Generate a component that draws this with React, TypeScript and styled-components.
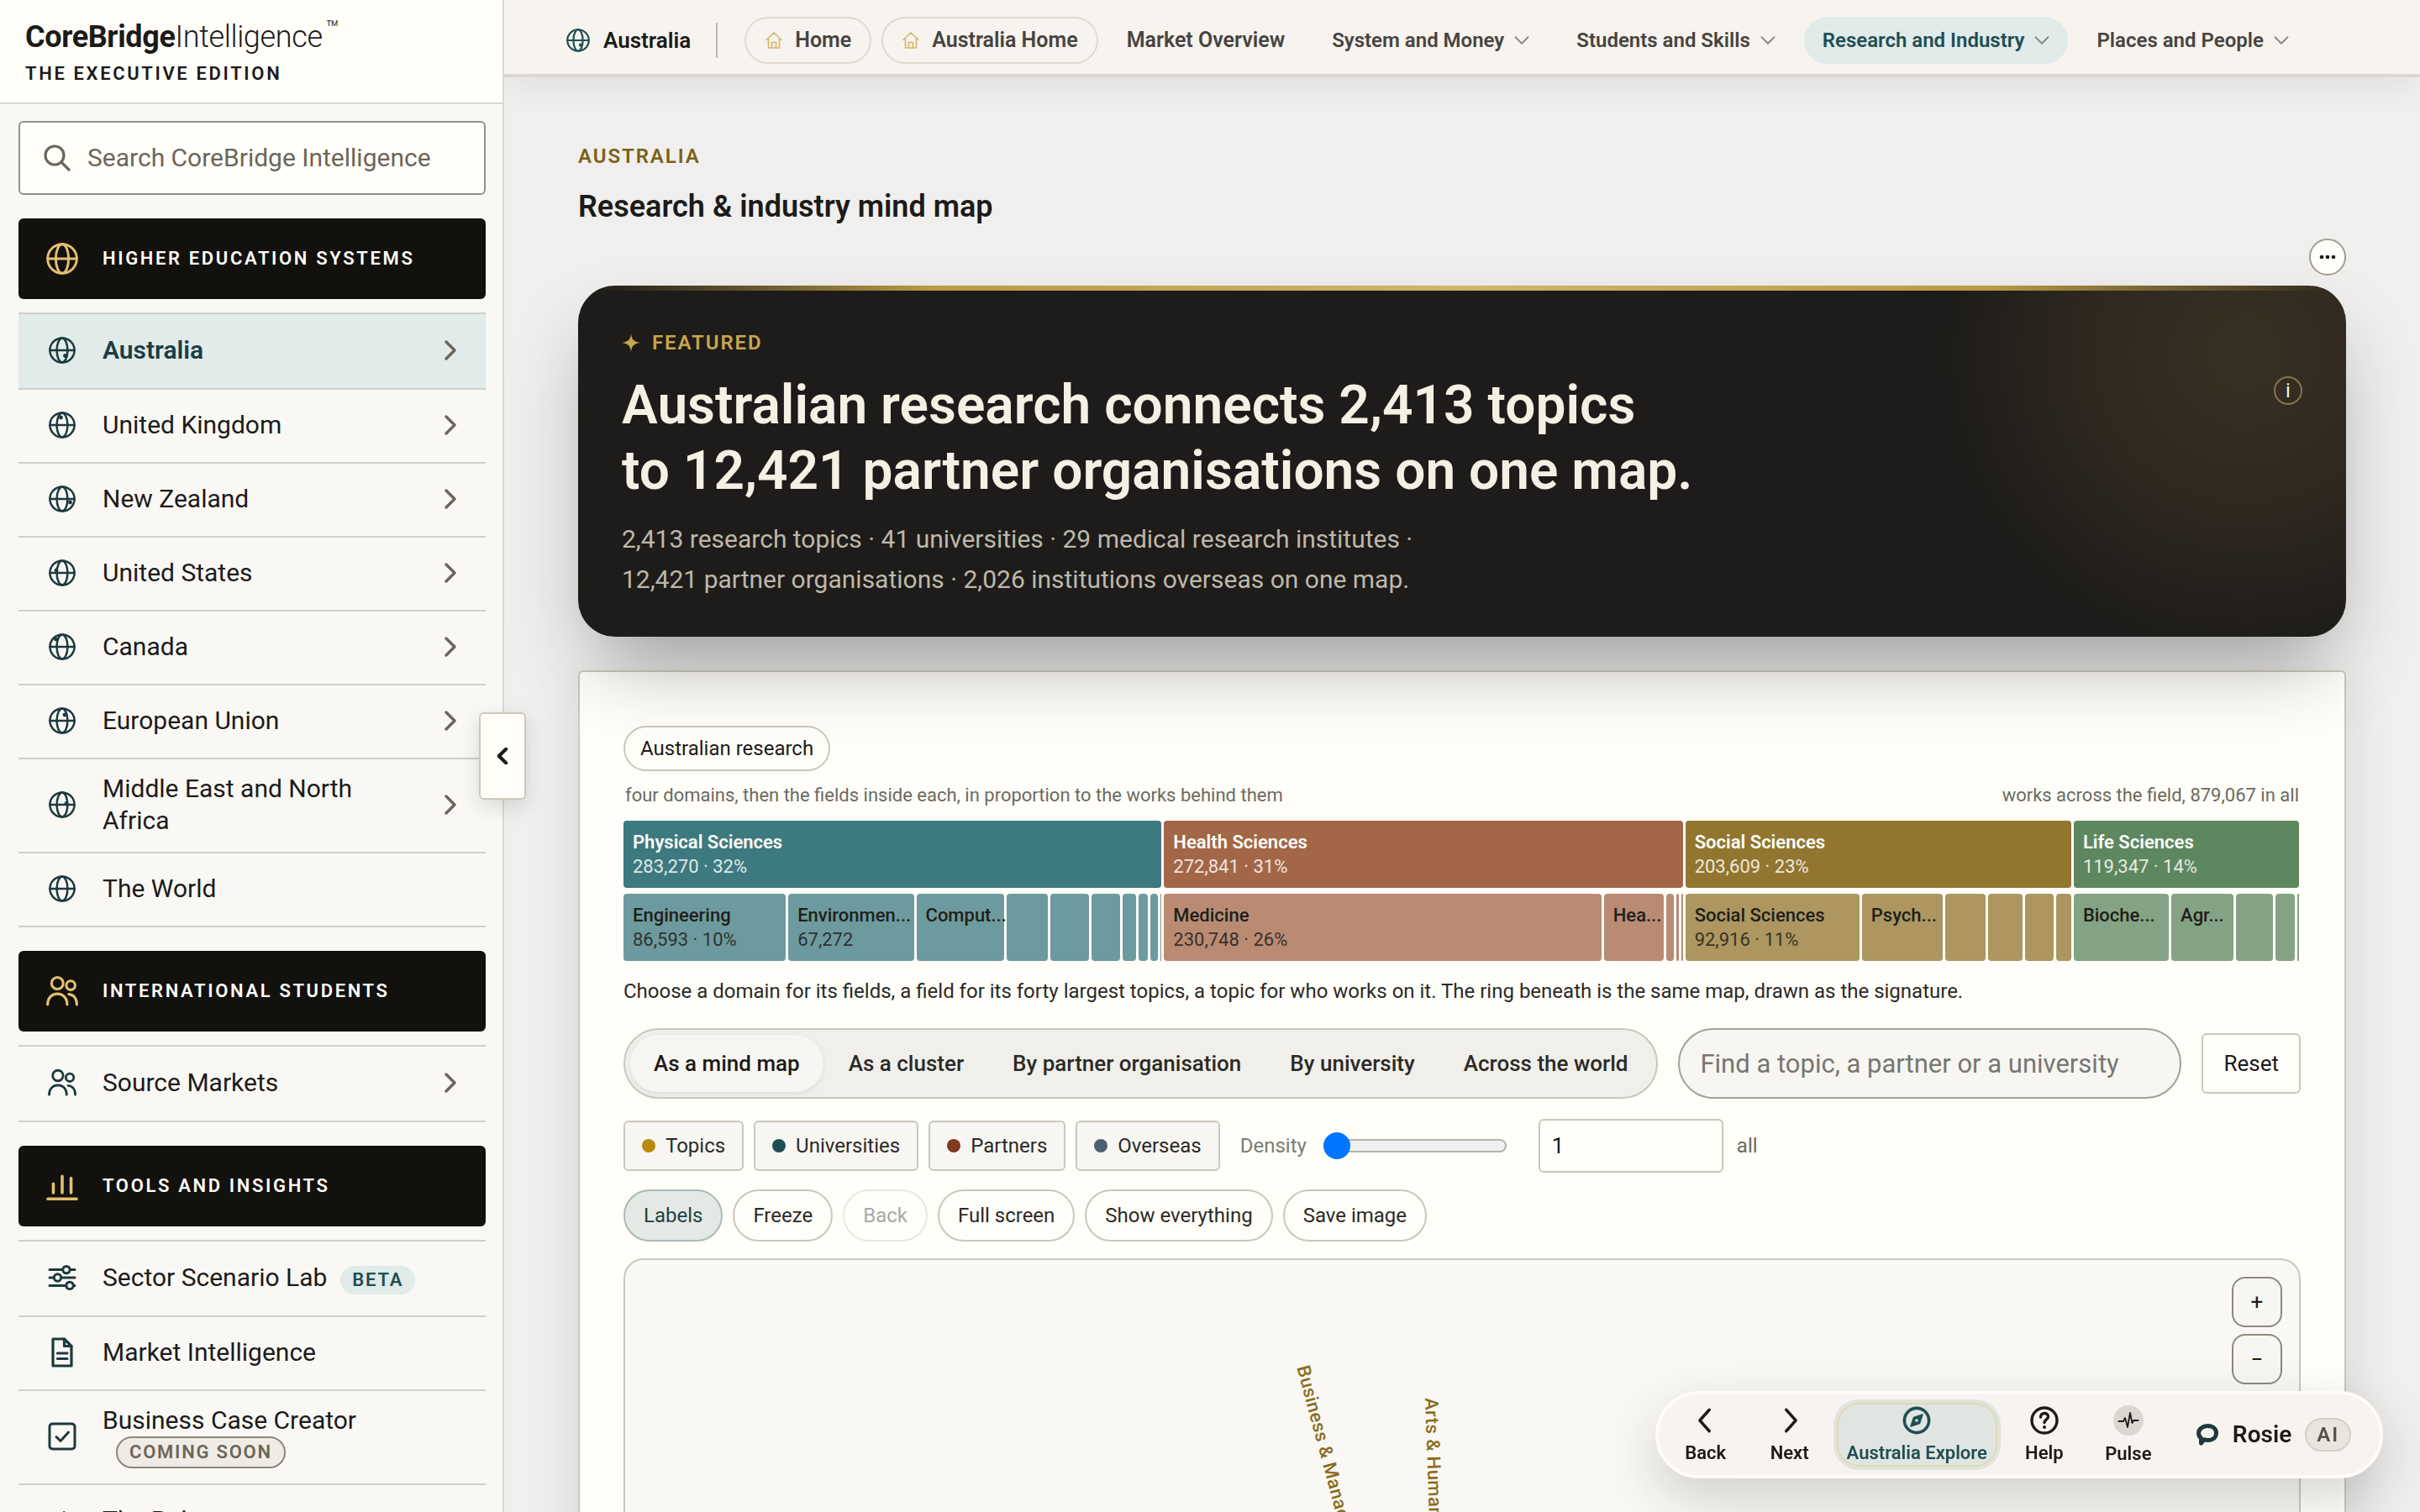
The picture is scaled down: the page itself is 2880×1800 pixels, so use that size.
import React from "react";
import styled, { createGlobalStyle, css } from "styled-components";

const GlobalStyle = createGlobalStyle`
  *, *::before, *::after { box-sizing: border-box; }
  html, body { margin: 0; padding: 0; }
  body {
    background: #f0efee;
    color: #1c1b19;
    font-family: Roboto, "Liberation Sans", sans-serif;
    font-size: 24px;
    line-height: 32px;
    overflow: hidden;
  }
  button, input { font: inherit; color: inherit; margin: 0; }
  button { cursor: pointer; padding: 0; background: none; border: 0; }
  a { color: inherit; text-decoration: none; }
  h1, h2, p, ul { margin: 0; padding: 0; }
  ul { list-style: none; }
  svg { display: block; flex: none; }
`;

/* ---------- icons ---------- */

const Svg = styled.svg.attrs({
  fill: "none",
  stroke: "currentColor",
  strokeLinecap: "round",
  strokeLinejoin: "round",
})<{ $size: number }>`
  width: ${(p) => p.$size}px;
  height: ${(p) => p.$size}px;
`;

type IconProps = { size: number };

const Globe = ({ size, dot }: IconProps & { dot?: [number, number] }) => (
  <Svg $size={size} viewBox="0 0 32 32" strokeWidth={2.5} aria-hidden="true">
    <circle cx="16" cy="16" r="14.6" />
    <ellipse cx="16" cy="16" rx="6.4" ry="14.6" />
    <path d="M1.4 16h29.2" />
    {dot && <circle cx={dot[0]} cy={dot[1]} r="2.4" fill="currentColor" stroke="none" />}
  </Svg>
);

const People = ({ size }: IconProps) => (
  <Svg $size={size} viewBox="0 0 36 36" strokeWidth={3} aria-hidden="true">
    <circle cx="12.6" cy="9" r="6.6" />
    <circle cx="27.6" cy="11.4" r="5" />
    <path d="M1.6 33c0-7.4 4.6-12 11-12s11 4.6 11 12" />
    <path d="M25.5 21.5c5.6.5 9 5 9 11.5" />
  </Svg>
);

const Bars = ({ size }: IconProps) => (
  <Svg $size={size} viewBox="0 0 36 36" strokeWidth={3.4} aria-hidden="true">
    <path d="M1.8 32.5h32.4M8 25.5v-10M18 25.5V7M28 25.5V9" />
  </Svg>
);

const Sliders = ({ size }: IconProps) => (
  <Svg $size={size} viewBox="0 0 34 34" strokeWidth={3} aria-hidden="true">
    <path d="M2 7.6h15.5M26.5 7.6H32M2 17h5M16 17h16M2 26.4h20M31 26.4h1" />
    <circle cx="22" cy="7.6" r="4.2" />
    <circle cx="11.5" cy="17" r="4.2" />
    <circle cx="26" cy="26.4" r="4.2" />
  </Svg>
);

const Doc = ({ size }: IconProps) => (
  <Svg $size={size} viewBox="0 0 36 36" strokeWidth={3.2} strokeLinejoin="miter" aria-hidden="true">
    <path d="M7 2h13.5L29 10.5V34H7z" />
    <path d="M20.5 2v8.5H29M12.5 19h11.5M12.5 25.5h11.5" />
  </Svg>
);

const CheckBox = ({ size }: IconProps) => (
  <Svg $size={size} viewBox="0 0 34 34" strokeWidth={3} aria-hidden="true">
    <rect x="2" y="2" width="30" height="30" rx="3.5" />
    <path d="M10 17.5l5 5 9.5-10.5" />
  </Svg>
);

const PulseLine = ({ size, width = 1.8 }: IconProps & { width?: number }) => (
  <Svg $size={size} viewBox="0 0 26 26" strokeWidth={width} aria-hidden="true">
    <path d="M1.5 14H7l2-4 3 11 3-17 2.5 12 1.5-3h5.5" />
  </Svg>
);

const Search = ({ size }: IconProps) => (
  <Svg $size={size} viewBox="0 0 32 32" strokeWidth={3.2} aria-hidden="true">
    <circle cx="13" cy="13" r="11" />
    <path d="M21.5 21.5L30 30" />
  </Svg>
);

const House = ({ size }: IconProps) => (
  <Svg $size={size} viewBox="0 0 22 22" strokeWidth={1.6} aria-hidden="true">
    <path d="M2 10.5L11 2l9 8.5M4.5 9V20h13V9M8.5 20v-6.5h5V20" />
  </Svg>
);

const Caret = ({ size, d, width = 3 }: IconProps & { d: string; width?: number }) => (
  <Svg $size={size} viewBox="0 0 24 24" strokeWidth={width} aria-hidden="true">
    <path d={d} />
  </Svg>
);

const RIGHT = "M7 2l10 10L7 22";
const LEFT = "M17 2L7 12l10 10";
const DOWN = "M2 7l10 10L22 7";

/* ---------- shell ---------- */

const Shell = styled.div`
  display: flex;
  height: 100vh;
  overflow: hidden;
`;

const Sidebar = styled.aside`
  position: relative;
  z-index: 3;
  flex: none;
  width: 600px;
  border-right: 2px solid #d9d8d3;
  background: #f9f8f5;
`;

const SidebarScroll = styled.div`
  height: 100vh;
  overflow: hidden;
`;

const Brand = styled.div`
  padding: 24px 30px 20px;
  border-bottom: 2px solid #d9d8d3;
  background: #fffef9;
`;

const Wordmark = styled.div`
  display: flex;
  align-items: flex-start;
  font-size: 36px;
  line-height: 40px;
  font-weight: 300;
  letter-spacing: -0.01em;
  b { font-weight: 700; }
  sup { font-size: 26px; line-height: 20px; letter-spacing: 0; margin-left: 4px; }
`;

const Tagline = styled.div`
  margin-top: 9px;
  font-size: 22px;
  line-height: 29px;
  font-weight: 600;
  letter-spacing: 0.12em;
`;

const SidebarBody = styled.div`
  display: flex;
  flex-direction: column;
  gap: 28px;
  padding: 20px 20px 0 22px;
`;

const SearchBox = styled.div`
  display: flex;
  align-items: center;
  gap: 20px;
  height: 88px;
  padding: 0 28px;
  border: 2px solid #92918a;
  border-radius: 6px;
  background: #fffef9;
  color: #6b665a;
  input {
    flex: 1;
    min-width: 0;
    padding: 0;
    border: 0;
    outline: 0;
    background: transparent;
    font-size: 30px;
  }
  input::placeholder { color: #6b665a; opacity: 1; }
`;

const SectionHead = styled.h2`
  display: grid;
  grid-template-columns: 40px 1fr;
  align-items: center;
  column-gap: 28px;
  height: 96px;
  margin: 0 0 16px;
  padding: 0 32px;
  border-radius: 6px;
  background: #12110e;
  color: #fffef9;
  font-size: 22px;
  line-height: 32px;
  font-weight: 600;
  letter-spacing: 0.12em;
  svg { justify-self: center; color: #e3c06f; }
`;

const NavList = styled.ul`
  border-top: 2px solid #d0cfca;
  li { border-bottom: 2px solid #d0cfca; }
  li:first-child a { min-height: 88px; }
`;

const NavRow = styled.a<{ $active?: boolean }>`
  display: grid;
  grid-template-columns: 40px 1fr auto;
  align-items: center;
  column-gap: 28px;
  min-height: 86px;
  padding: 16px 30px 18px 32px;
  font-size: 30px;
  line-height: 38px;
  color: ${(p) => (p.$active ? "#1d3d40" : "#1c1b19")};
  background: ${(p) => (p.$active ? "#e0ebea" : "transparent")};
  font-weight: ${(p) => (p.$active ? 600 : 400)};
  svg { justify-self: center; color: #1d3a3d; }
  > svg:last-child { color: #6b665a; }
`;

const Tag = styled.span<{ $outlined?: boolean }>`
  display: inline-block;
  margin-left: 16px;
  padding: 0 14px;
  border-radius: 20px;
  background: #e0ebea;
  color: #1f4e52;
  font-size: 22px;
  line-height: 34px;
  font-weight: 600;
  letter-spacing: 0.08em;
  ${(p) =>
    p.$outlined &&
    css`
      vertical-align: top;
      border: 2px solid #8a877b;
      background: #f0ece5;
      color: #6b665a;
    `}
`;

const CollapseButton = styled.button`
  position: absolute;
  top: 848px;
  right: -28px;
  display: flex;
  align-items: center;
  justify-content: center;
  width: 56px;
  height: 104px;
  border: 2px solid #cdc8ba;
  border-radius: 6px;
  background: #fffef9;
  box-shadow: 0 8px 24px rgba(28, 27, 25, 0.14);
`;

const Main = styled.main`
  position: relative;
  flex: 1;
  min-width: 0;
  display: flex;
  flex-direction: column;
  overflow: hidden;
`;

/* ---------- top bar ---------- */

const TopBar = styled.nav`
  flex: none;
  display: flex;
  align-items: center;
  gap: 12px;
  height: 92px;
  padding: 8px 74px 0;
  border-bottom: 4px solid #dbd8d4;
  background: #f7f3ee;
  box-shadow: 0 16px 40px -8px rgba(28, 27, 25, 0.08);
`;

const Here = styled.span`
  display: flex;
  align-items: center;
  gap: 16px;
  margin-right: 20px;
  padding-right: 30px;
  border-right: 2px solid #bdbab4;
  font-size: 26px;
  line-height: 42px;
  font-weight: 600;
  svg { color: #1f4e52; }
`;

const TopLink = styled.a<{ $outlined?: boolean; $active?: boolean; $menu?: boolean }>`
  display: flex;
  align-items: center;
  gap: ${(p) => (p.$outlined ? 14 : 12)}px;
  height: 56px;
  padding: 0 22px;
  border: ${(p) => (p.$outlined ? "2px solid #dddad4" : "0")};
  border-radius: 28px;
  background: ${(p) => (p.$active ? "#e0ebea" : "transparent")};
  color: ${(p) => (p.$active ? "#1f4e52" : "#47443f")};
  font-size: ${(p) => (p.$menu ? 24 : 25)}px;
  font-weight: 600;
  white-space: nowrap;
  svg { color: ${(p) => (p.$outlined ? "#d9b56a" : "#8b8983")}; }
`;

/* ---------- page ---------- */

const Page = styled.div`
  flex: 1;
  display: flex;
  flex-direction: column;
  padding: 78px 88px 0;
`;

const Eyebrow = styled.p`
  color: #7a6216;
  font-weight: 600;
  letter-spacing: 0.08em;
`;

const Title = styled.h1`
  margin-top: 20px;
  font-size: 36px;
  line-height: 48px;
  font-weight: 600;
`;

const MoreButton = styled.button`
  align-self: flex-end;
  display: flex;
  align-items: center;
  justify-content: center;
  width: 44px;
  height: 44px;
  margin: 14px 0 12px;
  border: 2px solid #a09e92;
  border-radius: 50%;
  background: #fffef9;
`;

const Hero = styled.section`
  position: relative;
  z-index: 1;
  display: flex;
  align-items: center;
  justify-content: space-between;
  padding: 50px 52px 44px;
  border-radius: 44px;
  background:
    linear-gradient(90deg, transparent 1%, #b99a45 20%, #d0b46e 50%, #b99a45 80%, transparent 99%) top / 100% 6px no-repeat,
    radial-gradient(circle 360px at calc(100% - 120px) 80px, #383022, #2f281f 50%, #1d1c1a) no-repeat,
    #1d1c1a;
  box-shadow: 0 48px 96px -24px rgba(28, 27, 25, 0.42);
  color: #f5f0e4;
`;

const Featured = styled.p`
  display: flex;
  align-items: center;
  gap: 14px;
  line-height: 36px;
  color: #c9a54a;
  font-weight: 600;
  letter-spacing: 0.08em;
`;

const HeroTitle = styled.h2`
  margin-top: 18px;
  font-size: 64px;
  line-height: 78px;
  font-weight: 600;
`;

const HeroText = styled.p`
  margin-top: 18px;
  color: #bdb8aa;
  font-size: 30px;
  line-height: 48px;
`;

const InfoButton = styled.button`
  align-self: flex-start;
  width: 34px;
  height: 34px;
  margin-top: 58px;
  border: 2px solid #857550;
  border-radius: 50%;
  font-size: 24px;
  line-height: 28px;
`;

const Card = styled.section`
  flex: 1;
  display: flex;
  flex-direction: column;
  margin-top: 40px;
  padding: 64px 52px 0;
  border: 2px solid #c9c8bc;
  border-radius: 6px;
  background: #fffef9;
  box-shadow: 0 16px 60px rgba(28, 27, 25, 0.12);
`;

const Row = styled.div<{ $gap: number; $mt: number }>`
  display: flex;
  align-items: center;
  gap: ${(p) => p.$gap}px;
  margin-top: ${(p) => p.$mt}px;
`;

const Pill = styled.button<{ $on?: boolean }>`
  height: 62px;
  padding: 0 22px;
  border: 2px solid ${(p) => (p.$on ? "#aab9b5" : "#c9c8bc")};
  border-radius: 31px;
  background: ${(p) => (p.$on ? "#e5e9e5" : "transparent")};
  color: ${(p) => (p.$on ? "#1f4244" : "#2b2a26")};
  &:disabled { opacity: 0.4; }
`;

const Crumb = styled.button`
  align-self: flex-start;
  height: 54px;
  padding: 0 18px;
  border: 2px solid #c9c8bc;
  border-radius: 27px;
`;

const Captions = styled.div`
  display: flex;
  justify-content: space-between;
  margin-top: 13px;
  padding: 0 2px;
  font-size: 22px;
  color: #6b6a60;
`;

const Treemap = styled.div`
  display: flex;
  gap: 3px;
  margin-top: 14px;
  padding-right: 2px;
`;

const Domain = styled.div`
  display: flex;
  flex-direction: column;
  gap: 7px;
  min-width: 0;
`;

const Fields = styled.div`
  display: flex;
  gap: 3px;
`;

const Cell = styled.button<{ $bg: string; $label?: boolean }>`
  min-width: 0;
  height: 80px;
  padding: ${(p) => (p.$label ? "0 0 0 11px" : 0)};
  border-radius: 4px;
  background: ${(p) => p.$bg};
  color: #fffef9;
  font-size: 22px;
  line-height: 29px;
  text-align: left;
  white-space: nowrap;
  b { display: block; font-weight: 600; }
  span { display: block; min-height: 29px; opacity: 0.84; }
`;

const FieldCell = styled(Cell)`
  flex-basis: 0;
  color: #1f1e1a;
  b { font-weight: 500; }
`;

const Hint = styled.p`
  margin-top: 20px;
  color: #2b2a26;
`;

const Segmented = styled.div`
  display: flex;
  gap: 2px;
  height: 84px;
  padding: 6px;
  border: 2px solid #c9c8bc;
  border-radius: 42px;
  background: #f0efea;
`;

const Segment = styled.button<{ $on?: boolean }>`
  padding: 0 28px;
  border-radius: 34px;
  font-size: 26px;
  font-weight: 500;
  white-space: nowrap;
  color: ${(p) => (p.$on ? "#1c1b19" : "#2b2a26")};
  background: ${(p) => (p.$on ? "#f7f6f2" : "transparent")};
  box-shadow: ${(p) => (p.$on ? "0 2px 6px rgba(28, 27, 25, 0.08)" : "none")};
`;

const Finder = styled.input`
  flex: 1;
  min-width: 0;
  height: 84px;
  padding: 0 24px;
  border: 2px solid #a3a296;
  border-radius: 42px;
  background: #f7f6f2;
  font-size: 31px;
  &::placeholder { color: #77766f; opacity: 1; }
`;

const Reset = styled.button`
  height: 72px;
  padding: 0 24px;
  border: 2px solid #c9c8bc;
  border-radius: 6px;
  font-size: 26px;
`;

const Kind = styled.button<{ $dot: string }>`
  display: flex;
  align-items: center;
  gap: 12px;
  height: 60px;
  padding: 0 20px;
  border: 2px solid #c9c8bc;
  border-radius: 6px;
  background: #f7f6f2;
  color: #2b2a26;
  &::before {
    content: "";
    width: 16px;
    height: 16px;
    border-radius: 50%;
    background: ${(p) => p.$dot};
  }
`;

const Density = styled.label`
  display: flex;
  align-items: center;
  gap: 20px;
  margin-left: 12px;
  color: #7d7b72;
`;

const Range = styled.input`
  appearance: none;
  width: 218px;
  height: 16px;
  border: 2px solid #b2b2b2;
  border-radius: 8px;
  background: #efefef;
  &::-webkit-slider-thumb {
    appearance: none;
    width: 32px;
    height: 32px;
    margin-left: -2px;
    border-radius: 50%;
    background: #0075ff;
  }
`;

const Amount = styled.label`
  display: flex;
  align-items: center;
  gap: 16px;
  margin-left: 26px;
  color: #6b6a60;
  input {
    width: 220px;
    height: 64px;
    padding: 0 14px;
    border: 2px solid #c9c8bc;
    border-radius: 6px;
    background: #fffef9;
    color: #1c1b19;
    font-size: 26px;
    appearance: textfield;
  }
`;

const MapCanvas = styled.div`
  position: relative;
  flex: 1;
  min-height: 600px;
  margin-top: 20px;
  border: 2px solid #c9c8bc;
  border-radius: 24px;
  background: #f9f8f4;
  overflow: hidden;
`;

const MapLabel = styled.span<{ $x: number; $y: number; $turn: number }>`
  position: absolute;
  left: ${(p) => p.$x}px;
  top: ${(p) => p.$y}px;
  font-size: 22px;
  line-height: 24px;
  font-weight: 500;
  letter-spacing: 0.02em;
  color: #8a6c1e;
  white-space: nowrap;
  transform-origin: 0 50%;
  transform: rotate(${(p) => p.$turn}deg);
`;

const Zoomers = styled.div`
  position: absolute;
  top: 20px;
  right: 20px;
  display: flex;
  flex-direction: column;
  gap: 8px;
  button {
    width: 60px;
    height: 60px;
    border: 2px solid #8b8a7e;
    border-radius: 16px;
    background: #f7f6f2;
    font-size: 26px;
  }
`;

/* ---------- dock ---------- */

const Dock = styled.nav`
  position: fixed;
  z-index: 4;
  right: 44px;
  bottom: 40px;
  display: flex;
  align-items: center;
  height: 104px;
  padding: 0 34px 0 6px;
  border: 4px solid #fdfcfa;
  border-radius: 52px;
  background: #f7f4f0;
  box-shadow: 0 24px 64px rgba(28, 27, 25, 0.18);
`;

const DockItem = styled.button<{ $on?: boolean }>`
  display: flex;
  flex-direction: column;
  align-items: center;
  justify-content: center;
  gap: 8px;
  min-width: 100px;
  height: 84px;
  padding: 2px 8px 0;
  font-size: 22px;
  line-height: 28px;
  font-weight: 600;
  ${(p) =>
    p.$on &&
    css`
      margin: 0 2px;
      padding: 2px 12px 0;
      border: 4px solid #dfe4de;
      border-radius: 30px;
      background: #e1e5e1;
      box-shadow: inset 0 0 0 2px #dfd9b0;
      color: #1f4e52;
    `}
`;

const PulseDisc = styled.span`
  display: flex;
  align-items: center;
  justify-content: center;
  width: 36px;
  height: 36px;
  border-radius: 50%;
  background: #dad7d1;
`;

const Rosie = styled.button`
  display: flex;
  align-items: center;
  gap: 16px;
  margin-left: 30px;
  font-size: 28px;
  font-weight: 600;
  svg { color: #1d3a3d; }
  small {
    padding: 0 12px;
    border: 2px solid #d3cfc8;
    border-radius: 20px;
    background: #e9e5df;
    color: #55514a;
    font-size: 24px;
    line-height: 36px;
    letter-spacing: 0.08em;
  }
`;

/* ---------- data ---------- */

type Item = { label: string; icon: React.ReactNode; chevron?: boolean; active?: boolean; tag?: string; outlined?: boolean };

const systems: Item[] = [
  { label: "Australia", icon: <Globe size={32} dot={[19.5, 22.5]} />, chevron: true, active: true },
  { label: "United Kingdom", icon: <Globe size={32} dot={[14.5, 7]} />, chevron: true },
  { label: "New Zealand", icon: <Globe size={32} dot={[25.5, 20]} />, chevron: true },
  { label: "United States", icon: <Globe size={32} dot={[9, 13]} />, chevron: true },
  { label: "Canada", icon: <Globe size={32} dot={[8.5, 7]} />, chevron: true },
  { label: "European Union", icon: <Globe size={32} dot={[19, 9]} />, chevron: true },
  { label: "Middle East and North Africa", icon: <Globe size={32} dot={[21, 14.5]} />, chevron: true },
  { label: "The World", icon: <Globe size={32} /> },
];

const students: Item[] = [{ label: "Source Markets", icon: <People size={34} />, chevron: true }];

const tools: Item[] = [
  { label: "Sector Scenario Lab", icon: <Sliders size={34} />, tag: "BETA" },
  { label: "Market Intelligence", icon: <Doc size={36} /> },
  { label: "Business Case Creator", icon: <CheckBox size={34} />, tag: "COMING SOON", outlined: true },
  { label: "The Pulse", icon: <PulseLine size={28} width={2.4} /> },
];

const sections = [
  { title: "HIGHER EDUCATION SYSTEMS", icon: <Globe size={38} />, items: systems },
  { title: "INTERNATIONAL STUDENTS", icon: <People size={38} />, items: students },
  { title: "TOOLS AND INSIGHTS", icon: <Bars size={38} />, items: tools },
];

type Field = { w: number; name?: string; full?: string; value?: string };

const domains: { name: string; value: string; w: number; bg: string; soft: string; fields: Field[] }[] = [
  {
    name: "Physical Sciences", value: "283,270 · 32%", w: 640, bg: "#3d7a80", soft: "#6d9a9e",
    fields: [
      { w: 183, name: "Engineering", value: "86,593 · 10%" },
      { w: 139, name: "Environmen...", full: "Environmental Science", value: "67,272" },
      { w: 94, name: "Comput...", full: "Computer Science" },
      { w: 49 }, { w: 46 }, { w: 34 }, { w: 17 }, { w: 11 }, { w: 9 }, { w: 1 },
    ],
  },
  {
    name: "Health Sciences", value: "272,841 · 31%", w: 617, bg: "#a36747", soft: "#b98b73",
    fields: [
      { w: 510, name: "Medicine", value: "230,748 · 26%" },
      { w: 60, name: "Hea...", full: "Health Professions" },
      { w: 9 }, { w: 3 }, { w: 2 },
    ],
  },
  {
    name: "Social Sciences", value: "203,609 · 23%", w: 459, bg: "#92762f", soft: "#ad965f",
    fields: [
      { w: 197, name: "Social Sciences", value: "92,916 · 11%" },
      { w: 86, name: "Psych...", full: "Psychology" },
      { w: 48 }, { w: 41 }, { w: 34 }, { w: 18 },
    ],
  },
  {
    name: "Life Sciences", value: "119,347 · 14%", w: 268, bg: "#5d875f", soft: "#84a385",
    fields: [
      { w: 103, name: "Bioche...", full: "Biochemistry" },
      { w: 63, name: "Agr...", full: "Agricultural Sciences" },
      { w: 45 }, { w: 23 }, { w: 2 },
    ],
  },
];

const menus = [
  { label: "System and Money" },
  { label: "Students and Skills" },
  { label: "Research and Industry", active: true },
  { label: "Places and People" },
];

const views = ["As a mind map", "As a cluster", "By partner organisation", "By university", "Across the world"];

const kinds = [
  { label: "Topics", dot: "#b88a08" },
  { label: "Universities", dot: "#1f4e52" },
  { label: "Partners", dot: "#7e3a22" },
  { label: "Overseas", dot: "#4a6072" },
];

const Section = ({ title, icon, items }: { title: string; icon: React.ReactNode; items: Item[] }) => (
  <section>
    <SectionHead>{icon}{title}</SectionHead>
    <NavList>
      {items.map((it) => (
        <li key={it.label}>
          <NavRow href="#" $active={it.active}>
            {it.icon}
            <span>
              {it.label}
              {it.tag && <Tag $outlined={it.outlined}>{it.tag}</Tag>}
            </span>
            {it.chevron && <Caret size={24} d={RIGHT} width={3.4} />}
          </NavRow>
        </li>
      ))}
    </NavList>
  </section>
);

export default function App() {
  return (
    <Shell>
      <GlobalStyle />
      <Sidebar>
        <SidebarScroll>
          <Brand>
            <Wordmark><span><b>CoreBridge</b>Intelligence</span><sup>™</sup></Wordmark>
            <Tagline>THE EXECUTIVE EDITION</Tagline>
          </Brand>
          <SidebarBody>
            <SearchBox>
              <Search size={32} />
              <input type="text" aria-label="Search" placeholder="Search CoreBridge Intelligence" />
            </SearchBox>
            {sections.map((s) => <Section key={s.title} {...s} />)}
          </SidebarBody>
        </SidebarScroll>
        <CollapseButton aria-label="Collapse menu"><Caret size={20} d={LEFT} width={5} /></CollapseButton>
      </Sidebar>

      <Main>
        <TopBar>
          <Here><Globe size={28} dot={[19.5, 22.5]} />Australia</Here>
          <TopLink href="#" $outlined><House size={22} />Home</TopLink>
          <TopLink href="#" $outlined><House size={22} />Australia Home</TopLink>
          <TopLink href="#">Market Overview</TopLink>
          {menus.map((m) => (
            <TopLink key={m.label} href="#" $menu $active={m.active}>
              {m.label}
              <Caret size={18} d={DOWN} width={2.5} />
            </TopLink>
          ))}
        </TopBar>

        <Page>
          <Eyebrow>AUSTRALIA</Eyebrow>
          <Title>Research &amp; industry mind map</Title>
          <MoreButton aria-label="More options">
            <Svg $size={20} viewBox="0 0 20 20" aria-hidden="true">
              <g fill="currentColor" stroke="none">
                <circle cx="3" cy="10" r="2.3" /><circle cx="10" cy="10" r="2.3" /><circle cx="17" cy="10" r="2.3" />
              </g>
            </Svg>
          </MoreButton>

          <Hero>
            <div>
              <Featured>
                <Svg $size={22} viewBox="0 0 22 22" aria-hidden="true">
                  <path fill="currentColor" stroke="none" d="M11 0c.8 7 3 9.8 11 11-8 1.200-10.200 4-11 11-.8-7-3-9.800-11-11C8 9.800 10.200 7 11 0z" />
                </Svg>
                FEATURED
              </Featured>
              <HeroTitle>
                Australian research connects 2,413 topics<br />
                to 12,421 partner organisations on one map.
              </HeroTitle>
              <HeroText>
                2,413 research topics · 41 universities · 29 medical research institutes ·<br />
                12,421 partner organisations · 2,026 institutions overseas on one map.
              </HeroText>
            </div>
            <InfoButton aria-label="About this map">i</InfoButton>
          </Hero>

          <Card>
            <Crumb>Australian research</Crumb>
            <Captions>
              <span>four domains, then the fields inside each, in proportion to the works behind them</span>
              <span>works across the field, 879,067 in all</span>
            </Captions>
            <Treemap>
              {domains.map((d) => (
                <Domain key={d.name} style={{ flex: `${d.w} 1 0` }}>
                  <Cell $bg={d.bg} $label><b>{d.name}</b><span>{d.value}</span></Cell>
                  <Fields>
                    {d.fields.map((f, i) => (
                      <FieldCell
                        key={i}
                        $bg={d.soft}
                        $label={!!f.name}
                        style={{ flexGrow: f.w }}
                        aria-label={f.full ?? f.name ?? "Smaller field"}
                      >
                        {f.name && <><b>{f.name}</b><span>{f.value}</span></>}
                      </FieldCell>
                    ))}
                  </Fields>
                </Domain>
              ))}
            </Treemap>
            <Hint>
              Choose a domain for its fields, a field for its forty largest topics, a topic for who works on it. The ring
              beneath is the same map, drawn as the signature.
            </Hint>

            <Row $gap={24} $mt={28}>
              <Segmented>
                {views.map((v, i) => <Segment key={v} $on={i === 0}>{v}</Segment>)}
              </Segmented>
              <Finder type="text" aria-label="Find" placeholder="Find a topic, a partner or a university" />
              <Reset>Reset</Reset>
            </Row>

            <Row $gap={12} $mt={24}>
              {kinds.map((k) => <Kind key={k.label} $dot={k.dot}>{k.label}</Kind>)}
              <Density>Density<Range type="range" min={1} max={100} defaultValue={1} /></Density>
              <Amount><input type="number" defaultValue={1} />all</Amount>
            </Row>

            <Row $gap={12} $mt={20}>
              <Pill $on>Labels</Pill>
              <Pill>Freeze</Pill>
              <Pill disabled>Back</Pill>
              <Pill>Full screen</Pill>
              <Pill>Show everything</Pill>
              <Pill>Save image</Pill>
            </Row>

            <MapCanvas>
              <MapLabel $x={806} $y={114} $turn={75}>Business &amp; Management</MapLabel>
              <MapLabel $x={959} $y={152} $turn={88}>Arts &amp; Humanities</MapLabel>
              <Zoomers>
                <button aria-label="Zoom in">+</button>
                <button aria-label="Zoom out">−</button>
              </Zoomers>
            </MapCanvas>
          </Card>
        </Page>
      </Main>

      <Dock>
        <DockItem><Caret size={34} d="M15 3L7 12l8 9" width={2.4} />Back</DockItem>
        <DockItem><Caret size={34} d="M9 3l8 9-8 9" width={2.4} />Next</DockItem>
        <DockItem $on>
          <Svg $size={34} viewBox="0 0 34 34" strokeWidth={3.6} aria-hidden="true">
            <circle cx="17" cy="17" r="14.6" />
            <path d="M24 10l-3.5 10.5L10 24l3.5-10.5z" fill="currentColor" strokeWidth={1.5} />
            <circle cx="17" cy="17" r="1.8" fill="#e1e5e1" stroke="none" />
          </Svg>
          Australia Explore
        </DockItem>
        <DockItem>
          <Svg $size={34} viewBox="0 0 34 34" strokeWidth={3.4} aria-hidden="true">
            <circle cx="17" cy="17" r="15" />
            <path d="M12.5 13c0-6 9-6 9-.5 0 3.500-4.500 3.500-4.500 7" />
            <circle cx="17" cy="25" r="2" fill="currentColor" stroke="none" />
          </Svg>
          Help
        </DockItem>
        <DockItem>
          <PulseDisc><PulseLine size={26} /></PulseDisc>
          Pulse
        </DockItem>
        <Rosie>
          <Svg $size={28} viewBox="0 0 28 28" strokeWidth={5} aria-hidden="true">
            <path d="M14.500 3.500c6 0 10 3.600 10 8.500s-4 8.500-10 8.500c-1.800 0-3-.3-4.300-.8L6.500 24v-6C4.500 16.500 3.500 14.500 3.500 12c0-4.900 5-8.500 11-8.500z" />
          </Svg>
          Rosie
          <small>AI</small>
        </Rosie>
      </Dock>
    </Shell>
  );
}
